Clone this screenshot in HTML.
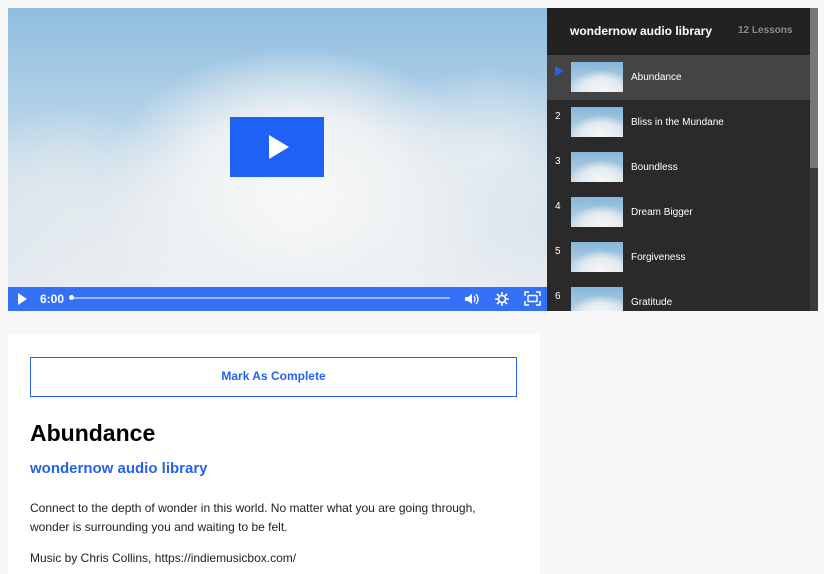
<!DOCTYPE html>
<html><head><meta charset="utf-8"><style>
*{box-sizing:border-box;margin:0;padding:0}
body{width:824px;height:572px;overflow:hidden;background:#f7f7f7;font-family:"Liberation Sans",sans-serif;position:relative}
.video{position:absolute;left:8px;top:8px;width:539px;height:303px;background:radial-gradient(ellipse 200px 150px at 290px 190px,#f7f8f9 0%,#eef1f3 55%,transparent 100%),radial-gradient(ellipse 300px 120px at 270px 280px,#f0f2f4,transparent),radial-gradient(ellipse 120px 90px at 480px 150px,#e6ecf0,transparent),radial-gradient(ellipse 120px 100px at 60px 200px,#e2e9ee,transparent),linear-gradient(180deg,#8fbddf 0%,#b3d2e8 35%,#d6e3ec 60%,#e6ebef 100%);overflow:hidden}
.play{position:absolute;left:222px;top:109px;width:94px;height:60px;background:#1f61f5}
.play:after{content:"";position:absolute;left:39px;top:18px;border-left:20px solid #fff;border-top:12px solid transparent;border-bottom:12px solid transparent}
.bar{position:absolute;left:0;top:279px;width:539px;height:24px;background:#3571f7;color:#fff;font-size:12px;font-weight:bold}
.side{position:absolute;left:547px;top:8px;width:271px;height:303px;background:#2a2a2a;overflow:hidden}
.hdr{height:47px;background:#222;color:#fff;font-weight:bold;font-size:12px;padding:16px 0 0 23px;position:relative}
.hdr span{position:absolute;left:191px;top:17px;color:#8a8a8a;font-size:10px}
.row{height:45px;position:relative;color:#fff;font-size:10px}
.row.a{background:#444}
.row .n{position:absolute;left:8px;top:11px;font-size:10px}
.thumb{position:absolute;left:24px;top:7px;width:52px;height:30px;background:radial-gradient(ellipse 32px 20px at 30px 28px,#f5f7f8,#e3eaee 60%,transparent),linear-gradient(180deg,#85b6da,#c4d9e7)}
.row .t{position:absolute;left:84px;top:17px}
.scroll{position:absolute;left:263px;top:0;width:8px;height:303px;background:#3a3a3a}
.scroll div{width:8px;height:160px;background:#777}
.card{position:absolute;left:8px;top:334px;width:532px;height:240px;background:#fff}
.btn{position:absolute;left:22px;top:23px;width:487px;height:40px;border:1.5px solid #2563eb;color:#2563eb;text-align:center;font-weight:bold;font-size:12px;line-height:37px}
h1{position:absolute;left:22px;top:86px;font-size:23px;font-weight:bold;color:#000}
h2{position:absolute;left:22px;top:126px;font-size:15px;font-weight:bold;color:#2563eb}
p{position:absolute;left:22px;font-size:12px;color:#222;line-height:19px;width:480px}
</style></head><body>
<div class="video"><div class="play"></div>
<div class="bar">
<div style="position:absolute;left:10px;top:6px;border-left:9px solid #fff;border-top:6px solid transparent;border-bottom:6px solid transparent"></div>
<div style="position:absolute;left:32px;top:5px">6:00</div>
<div style="position:absolute;left:62px;top:10px;width:380px;height:2px;background:#9db8fa"></div>
<div style="position:absolute;left:61px;top:8px;width:5px;height:5px;border-radius:50%;background:#fff"></div>
<svg style="position:absolute;left:456px;top:5px" width="16" height="14" viewBox="0 0 16 14"><path d="M1 5h3l4-3v10l-4-3H1z" fill="#fff"/><path d="M10 4q2 3 0 6M12 2q4 5 0 10" stroke="#fff" stroke-width="1.3" fill="none"/></svg>
<svg style="position:absolute;left:487px;top:5px" width="14" height="14" viewBox="0 0 14 14"><circle cx="7" cy="7" r="3.5" fill="none" stroke="#fff" stroke-width="1.6"/><path d="M7 0v3M7 11v3M0 7h3M11 7h3M2 2l2 2M10 10l2 2M2 12l2-2M10 4l2-2" stroke="#fff" stroke-width="1.6"/></svg>
<svg style="position:absolute;left:516px;top:4px" width="17" height="15" viewBox="0 0 17 15"><path d="M1 5V1h4M12 1h4v4M16 10v4h-4M5 14H1v-4" stroke="#fff" stroke-width="1.5" fill="none"/><rect x="4" y="4.5" width="9" height="6" rx="1" fill="none" stroke="#fff" stroke-width="1.5"/></svg>
</div></div>
<div class="side">
<div class="hdr">wondernow audio library<span>12 Lessons</span></div>
<div class="row a"><div style="position:absolute;left:8px;top:11px;border-left:9px solid #2563eb;border-top:5px solid transparent;border-bottom:5px solid transparent"></div><div class="thumb"></div><div class="t">Abundance</div></div>
<div class="row"><div class="n">2</div><div class="thumb"></div><div class="t">Bliss in the Mundane</div></div>
<div class="row"><div class="n">3</div><div class="thumb"></div><div class="t">Boundless</div></div>
<div class="row"><div class="n">4</div><div class="thumb"></div><div class="t">Dream Bigger</div></div>
<div class="row"><div class="n">5</div><div class="thumb"></div><div class="t">Forgiveness</div></div>
<div class="row"><div class="n">6</div><div class="thumb"></div><div class="t">Gratitude</div></div>
<div class="scroll"><div></div></div>
</div>
<div class="card">
<div class="btn">Mark As Complete</div>
<h1>Abundance</h1>
<h2>wondernow audio library</h2>
<p style="top:165px">Connect to the depth of wonder in this world. No matter what you are going through, wonder is surrounding you and waiting to be felt.</p>
<p style="top:215px">Music by Chris Collins, https://indiemusicbox.com/</p>
</div>
</body></html>
